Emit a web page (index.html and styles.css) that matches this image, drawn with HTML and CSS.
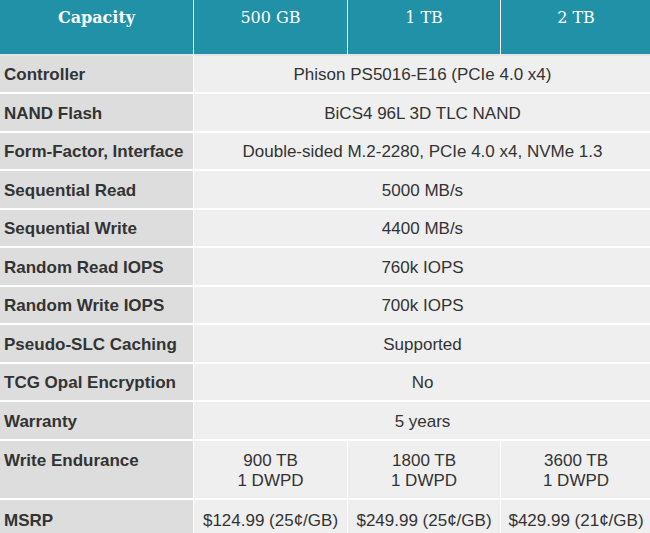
FILE: index.html
```html
<!DOCTYPE html>
<html>
<head>
<meta charset="utf-8">
<link rel="stylesheet" href="styles.css">
</head>
<body>
<table class="spec">
  <colgroup>
    <col class="c-label"><col class="c-val"><col class="c-val2"><col class="c-val3">
  </colgroup>
  <thead>
    <tr>
      <th class="h-label">Capacity</th>
      <th>500 GB</th>
      <th>1 TB</th>
      <th>2 TB</th>
    </tr>
  </thead>
  <tbody>
    <tr><td class="label">Controller</td><td class="val" colspan="3">Phison PS5016-E16 (PCIe 4.0 x4)</td></tr>
    <tr><td class="label">NAND Flash</td><td class="val" colspan="3">BiCS4 96L 3D TLC NAND</td></tr>
    <tr><td class="label">Form-Factor, Interface</td><td class="val" colspan="3">Double-sided M.2-2280, PCIe 4.0 x4, NVMe 1.3</td></tr>
    <tr><td class="label">Sequential Read</td><td class="val" colspan="3">5000 MB/s</td></tr>
    <tr><td class="label">Sequential Write</td><td class="val" colspan="3">4400 MB/s</td></tr>
    <tr><td class="label">Random Read IOPS</td><td class="val" colspan="3">760k IOPS</td></tr>
    <tr><td class="label">Random Write IOPS</td><td class="val" colspan="3">700k IOPS</td></tr>
    <tr><td class="label">Pseudo-SLC Caching</td><td class="val" colspan="3">Supported</td></tr>
    <tr><td class="label">TCG Opal Encryption</td><td class="val" colspan="3">No</td></tr>
    <tr><td class="label">Warranty</td><td class="val" colspan="3">5 years</td></tr>
    <tr class="tall"><td class="label">Write Endurance</td><td class="val">900 TB<br>1 DWPD</td><td class="val">1800 TB<br>1 DWPD</td><td class="val">3600 TB<br>1 DWPD</td></tr>
    <tr class="last"><td class="label">MSRP</td><td class="val">$124.99 (25¢/GB)</td><td class="val">$249.99 (25¢/GB)</td><td class="val">$429.99 (21¢/GB)</td></tr>
  </tbody>
</table>
</body>
</html>
```

FILE: styles.css
```css
html, body {
  margin: 0;
  padding: 0;
  background: #ffffff;
  overflow: hidden;
}

.spec {
  width: 652px;
  border-collapse: separate;
  border-spacing: 0;
  table-layout: fixed;
  font-family: "Liberation Sans", Arial, sans-serif;
  font-size: 17px;
  color: #333333;
}

.c-label { width: 194px; }
.c-val { width: 154px; }
.c-val2 { width: 153px; }
.c-val3 { width: 151px; }

.spec th {
  background: #2191a7;
  color: #ffffff;
  font-family: "DejaVu Serif", "Liberation Serif", serif;
  font-weight: normal;
  font-size: 16px;
  line-height: 20px;
  padding: 8px 4px 26px;
  text-align: center;
  vertical-align: top;
  border-right: 1px solid #ffffff;
  border-bottom: 2px solid #e4e4e4;
}

.spec th.h-label {
  font-weight: bold;
}

.spec td {
  line-height: 20px;
  padding: 9.2px 4px 7.3px;
  vertical-align: top;
  border-bottom: 2px solid #ffffff;
  border-right: 1px solid #ffffff;
}

.spec tr.tall td {
  padding-top: 10.2px;
}

.spec tr.last td {
  padding-top: 11px;
}

.label {
  background: #dddddd;
  font-weight: bold;
  text-align: left;
  white-space: nowrap;
}

.val {
  background: #efefef;
  text-align: center;
  white-space: nowrap;
}
```
